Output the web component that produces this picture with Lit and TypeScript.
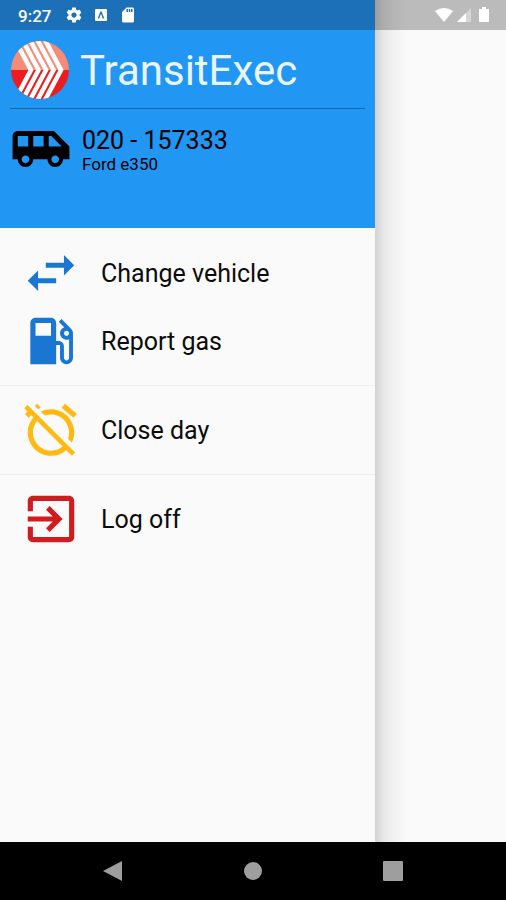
import { LitElement, html, svg, css } from "lit";
import { customElement } from "lit/decorators.js";

const icons = {
  van: "M17 5H3c-1.1 0-2 .89-2 2v9h2c0 1.65 1.34 3 3 3s3-1.35 3-3h5.5c0 1.65 1.34 3 3 3s3-1.35 3-3H23v-5l-6-6zM3 11V7h4v4H3zm3 6.5c-.83 0-1.5-.67-1.5-1.5s.67-1.5 1.5-1.5 1.5.67 1.5 1.5-.67 1.5-1.5 1.5zm7-6.5H9V7h4v4zm4.5 6.5c-.83 0-1.5-.67-1.5-1.5s.67-1.5 1.5-1.5 1.5.67 1.5 1.5-.67 1.5-1.5 1.5zM15 11V7h1l4 4h-5z",
  swap: "M6.99 11L3 15l3.99 4v-3H14v-2H6.99v-3zM21 9l-3.99-4v3H10v2h7.01v3L21 9z",
  gas: "M19.77 7.23l.01-.01-3.72-3.72L15 4.56l2.11 2.11c-.94.36-1.61 1.26-1.61 2.33 0 1.38 1.12 2.5 2.5 2.5.36 0 .69-.08 1-.21v7.21c0 .55-.45 1-1 1s-1-.45-1-1V14c0-1.1-.9-2-2-2h-1V5c0-1.1-.9-2-2-2H6c-1.1 0-2 .9-2 2v16h10v-7.5h1.5v5c0 1.38 1.12 2.5 2.5 2.5s2.5-1.12 2.5-2.5V9c0-.69-.28-1.32-.73-1.77zM12 10H6V5h6v5zm6 0c-.55 0-1-.45-1-1s.45-1 1-1 1 .45 1 1-.45 1-1 1z",
  alarmOff: "M12 6c3.87 0 7 3.13 7 7 0 .84-.16 1.65-.43 2.4l1.52 1.52c.58-1.19.91-2.51.91-3.92 0-4.97-4.03-9-9-9-1.41 0-2.73.33-3.92.91L9.6 6.43C10.35 6.16 11.16 6 12 6zm10-.28l-4.6-3.86-1.29 1.53 4.6 3.86L22 5.72zM2.92 2.29L1.65 3.57 2.98 4.9l-1.11.93 1.42 1.42 1.11-.94.8.8C3.83 8.69 3 10.75 3 13c0 4.97 4.02 9 9 9 2.25 0 4.31-.83 5.89-2.2l2.2 2.2 1.27-1.27L3.89 3.27l-.97-.98zm13.55 16.1C15.26 19.39 13.7 20 12 20c-3.87 0-7-3.13-7-7 0-1.7.61-3.26 1.61-4.47l9.86 9.86zM8.02 3.28L6.6 1.86l-.86.71 1.42 1.42.86-.71z",
  exit: "M10.09 15.59L11.5 17l5-5-5-5-1.41 1.41L12.67 11H3v2h9.67l-2.58 2.59zM19 3H5c-1.11 0-2 .9-2 2v4h2V5h14v14H5v-4H3v4c0 1.1.89 2 2 2h14c1.1 0 2-.9 2-2V5c0-1.1-.9-2-2-2z",
  gear: "M19.43 12.98c.04-.32.07-.64.07-.98s-.03-.66-.07-.98l2.11-1.65c.19-.15.24-.42.12-.64l-2-3.46c-.12-.22-.39-.3-.61-.22l-2.49 1c-.52-.4-1.08-.73-1.69-.98l-.38-2.65C14.46 2.18 14.25 2 14 2h-4c-.25 0-.46.18-.49.42l-.38 2.65c-.61.25-1.17.59-1.69.98l-2.49-1c-.23-.09-.49 0-.61.22l-2 3.46c-.13.22-.07.49.12.64l2.11 1.65c-.04.32-.07.65-.07.98s.03.66.07.98l-2.11 1.65c-.19.15-.24.42-.12.64l2 3.46c.12.22.39.3.61.22l2.49-1c.52.4 1.08.73 1.69.98l.38 2.65c.03.24.24.42.49.42h4c.25 0 .46-.18.49-.42l.38-2.65c.61-.25 1.17-.59 1.69-.98l2.49 1c.23.09.49 0 .61-.22l2-3.46c.12-.22.07-.49-.12-.64l-2.11-1.65zM12 15.5c-1.93 0-3.5-1.57-3.5-3.5s1.57-3.5 3.5-3.5 3.5 1.57 3.5 3.5-1.57 3.5-3.5 3.5z",
  sdCard: "M18 2h-8L4.02 8 4 20c0 1.1.9 2 2 2h12c1.1 0 2-.9 2-2V4c0-1.1-.9-2-2-2zm-6 6h-2V4h2v4zm3 0h-2V4h2v4zm3 0h-2V4h2v4z",
};

const icon = (path: string, cls: string) =>
  html`<svg class=${cls} viewBox="0 0 24 24" aria-hidden="true"><path d=${path}></path></svg>`;

const menuGroups = [
  [
    { label: "Change vehicle", path: icons.swap, tone: "blue" },
    { label: "Report gas", path: icons.gas, tone: "blue" },
  ],
  [{ label: "Close day", path: icons.alarmOff, tone: "amber" }],
  [{ label: "Log off", path: icons.exit, tone: "red" }],
];

/* x of each chevron tip on the logo's horizontal axis */
const chevronTips = [21, 28.5, 36, 43.5, 51];

@customElement("app-root")
export class AppRoot extends LitElement {
  static styles = css`
    :host {
      display: flex;
      flex-direction: column;
      min-height: 100vh;
      background: #fafafa;
      color: #0c0c0c;
      font-family: Roboto, "Liberation Sans", sans-serif;
    }
    svg { display: block; flex: none; fill: currentColor; }
    button { border: 0; background: none; font: inherit; color: inherit; cursor: pointer; }
    .body { flex: 1; display: grid; grid-template-columns: 20fr 7fr; }
    .drawer { display: flex; flex-direction: column; background: #fafafa; }
    .status { height: 30px; display: flex; align-items: center; color: #fff; }
    .status-left { background: #1b70b8; gap: 9px; padding-left: 18px; }
    .status-right { background: rgba(0, 0, 0, 0.25); justify-content: flex-end; gap: 2px; padding-right: 13px; }
    .page {
      background: linear-gradient(to right, rgba(0, 0, 0, 0.16), rgba(0, 0, 0, 0.08) 8px, rgba(0, 0, 0, 0.03) 20px, transparent 32px);
    }
    .time { font-size: 17px; font-weight: 500; line-height: 20px; padding: 2px 5px 0 0; }
    .small { width: 18px; height: 18px; }
    .header { background: #2196f3; height: 198px; box-sizing: border-box; padding: 10px; }
    .brand {
      display: flex;
      align-items: center;
      gap: 10px;
      height: 69px;
      box-sizing: border-box;
      padding-bottom: 8px;
      border-bottom: 1px solid #1565a5;
    }
    .logo { width: 60px; height: 60px; }
    h1 { margin: 0; padding-top: 2px; font-size: 42px; line-height: 48px; font-weight: 400; color: #e8f5ff; }
    .vehicle { display: flex; align-items: center; gap: 10px; padding-top: 9px; color: #000; }
    .big { width: 62px; height: 62px; }
    .vehicle p { margin: 0; }
    .number { padding-top: 3px; font-size: 25px; line-height: 26px; }
    .model { font-size: 17px; line-height: 20px; }
    .menu { padding-top: 11px; }
    .item {
      display: flex;
      align-items: center;
      gap: 19px;
      width: 100%;
      height: 68px;
      padding: 0 20px;
      font-size: 25px;
      text-align: left;
    }
    .group + .group { margin-top: 10px; padding-top: 10px; border-top: 1px solid #efefef; }
    .blue { color: #1976d2; }
    .amber { color: #ffb910; }
    .red { color: #d01c1f; }
    .navbar {
      height: 58px;
      display: flex;
      justify-content: center;
      align-items: center;
      gap: 120px;
      background: #000;
      color: #9e9e9e;
    }
    .navbar button { padding: 0; }
    .key { width: 20px; height: 20px; }
  `;

  render() {
    return html`
      <div class="body">
        <aside class="drawer">
          <div class="status status-left">
            <span class="time">9:27</span>
            ${icon(icons.gear, "small")}
            <svg class="small" viewBox="0 0 18 18" aria-hidden="true">
              <path fill-rule="evenodd" d="M4 3h10q1 0 1 1v10q0 1-1 1H4q-1 0-1-1V4q0-1 1-1zM8.3 5.5L5.8 12.5h1.5L9 7.5l1.7 5h1.5L9.7 5.5z"></path>
            </svg>
            ${icon(icons.sdCard, "small")}
          </div>
          <header class="header">
            <div class="brand">
              <svg class="logo" viewBox="0 0 60 60" role="img" aria-label="TransitExec logo">
                <clipPath id="disc"><circle cx="30" cy="30" r="29"></circle></clipPath>
                <g clip-path="url(#disc)">
                  <path fill="#f68c76" d="M0 0h60v30H0z"></path>
                  <path fill="#ee1c20" d="M0 30h60v30H0z"></path>
                  ${chevronTips.map((x) => svg`<path fill="none" stroke="#fff" stroke-width="4.6" d="M${x - 16} 0L${x} 30L${x - 16} 60"></path>`)}
                </g>
              </svg>
              <h1>TransitExec</h1>
            </div>
            <div class="vehicle">
              ${icon(icons.van, "big")}
              <div>
                <p class="number">020 - 157333</p>
                <p class="model">Ford e350</p>
              </div>
            </div>
          </header>
          <nav class="menu">
            ${menuGroups.map((group) => html`<div class="group">
              ${group.map((item) => html`<button class="item">
                ${icon(item.path, `big ${item.tone}`)}<span>${item.label}</span>
              </button>`)}
            </div>`)}
          </nav>
        </aside>
        <main class="page">
          <div class="status status-right">
            <svg class="small" viewBox="0 0 18 18" aria-hidden="true"><path d="M0 5Q9-1 18 5L9 16z"></path></svg>
            <svg class="small" viewBox="0 0 18 18" aria-hidden="true"><path opacity=".4" d="M16 2v14H2z"></path><path d="M11 7v9H2z"></path></svg>
            <svg class="small" viewBox="0 0 18 18" aria-hidden="true"><path d="M7 1h4v2h3v13H4V3h3z"></path></svg>
          </div>
        </main>
      </div>
      <footer class="navbar">
        <button aria-label="Back"><svg class="key" viewBox="0 0 20 20"><path d="M19 0v20L0 10z"></path></svg></button>
        <button aria-label="Home"><svg class="key" viewBox="0 0 20 20"><circle cx="10" cy="10" r="9"></circle></svg></button>
        <button aria-label="Recent apps"><svg class="key" viewBox="0 0 20 20"><rect width="20" height="20" rx="1"></rect></svg></button>
      </footer>
    `;
  }
}
